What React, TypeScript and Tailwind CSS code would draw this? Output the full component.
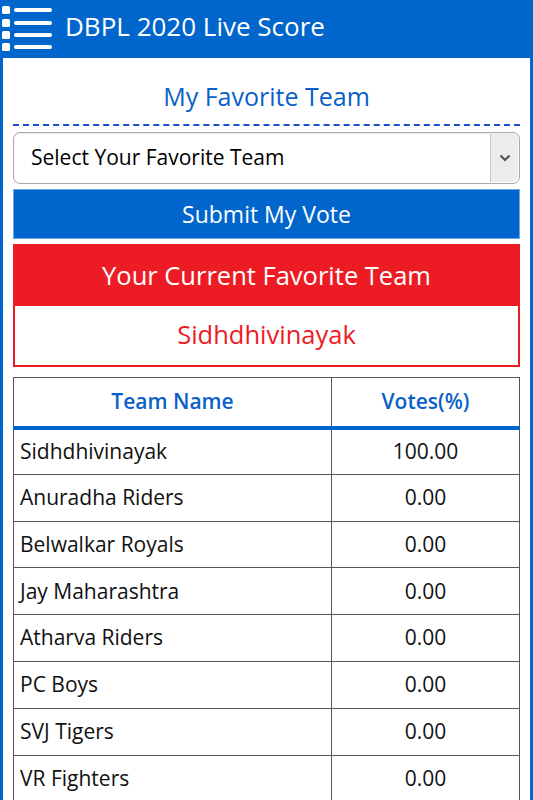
import React from 'react';

const teams = [
  { name: 'Sidhdhivinayak', votes: '100.00' },
  { name: 'Anuradha Riders', votes: '0.00' },
  { name: 'Belwalkar Royals', votes: '0.00' },
  { name: 'Jay Maharashtra', votes: '0.00' },
  { name: 'Atharva Riders', votes: '0.00' },
  { name: 'PC Boys', votes: '0.00' },
  { name: 'SVJ Tigers', votes: '0.00' },
  { name: 'VR Fighters', votes: '0.00' },
];

// list icon in the header
const MenuIcon = () => (
  <svg width="54" height="52" viewBox="0 0 54 52" className="shrink-0">
    {[7, 20, 32, 44].map(y => (
      <g key={y}>
        <rect x="2" y={y - 4} width="8" height="8" rx="1.5" fill="#fff" />
        <rect x="14" y={y - 2} width="38" height="4" rx="2" fill="#fff" />
      </g>
    ))}
  </svg>
);

export default function App() {
  return (
    <div className="w-[533px] h-[800px] overflow-hidden bg-[#0066cc]" style={{ fontFamily: '"Open Sans", "Noto Sans", sans-serif' }}>
      {/* Header */}
      <div className="h-[58px] flex items-center gap-[11px]">
        <MenuIcon />
        <h1 className="text-white text-[26px] leading-none -mt-[6px]">DBPL 2020 Live Score</h1>
      </div>

      {/* Content */}
      <div className="mx-[3px] bg-white px-[10px] pb-4 h-[742px]">
        <h2 className="text-center text-[#0a5fc8] text-[25px] leading-none pt-[26px] pb-[15px]">My Favorite Team</h2>
        <div className="border-t-2 border-dashed border-[#1a4fd0]" />

        <div className="mt-[6px] h-[52px] rounded-[7px] border border-[#a8a8a8] flex items-stretch overflow-hidden shadow-[inset_0_1px_2px_rgba(0,0,0,0.08)]">
          <div className="flex-1 flex items-center pl-[17px] text-[21px] text-black">Select Your Favorite Team</div>
          <div className="w-[28px] my-[1px] mr-[1px] bg-[#ececec] border-l border-[#c8c8c8] rounded-r-[6px] flex items-center justify-center">
            <svg width="12" height="8" viewBox="0 0 12 8">
              <path d="M1.5 1.5 L6 6 L10.5 1.5" stroke="#555" strokeWidth="2.2" fill="none" />
            </svg>
          </div>
        </div>

        <button className="mt-[5px] w-full h-[50px] bg-[#0066cc] border border-[#6aa6e8] text-white text-[23px]">Submit My Vote</button>

        <div className="mt-[5px] border-2 border-[#ed1c24]">
          <div className="h-[60px] bg-[#ed1c24] flex items-center justify-center text-white text-[25.5px] pb-[2px]">Your Current Favorite Team</div>
          <div className="h-[59px] flex items-center justify-center text-[#ed1c24] text-[25.5px] pb-[2px]">Sidhdhivinayak</div>
        </div>

        <table className="mt-[10px] w-full border-collapse text-[21px]">
          <thead>
            <tr className="h-[50px]">
              <th className="w-[318px] border border-[#555] border-b-[#0066cc] border-b-[4px] text-[#0a5fc8] font-semibold">Team Name</th>
              <th className="border border-[#555] border-b-[#0066cc] border-b-[4px] text-[#0a5fc8] font-semibold">Votes(%)</th>
            </tr>
          </thead>
          <tbody>
            {teams.map(t => (
              <tr key={t.name} className="h-[46.8px]">
                <td className="border border-[#555] pl-[6px] text-[#111]">{t.name}</td>
                <td className="border border-[#555] text-center text-[#111]">{t.votes}</td>
              </tr>
            ))}
          </tbody>
        </table>
      </div>
    </div>
  );
}
